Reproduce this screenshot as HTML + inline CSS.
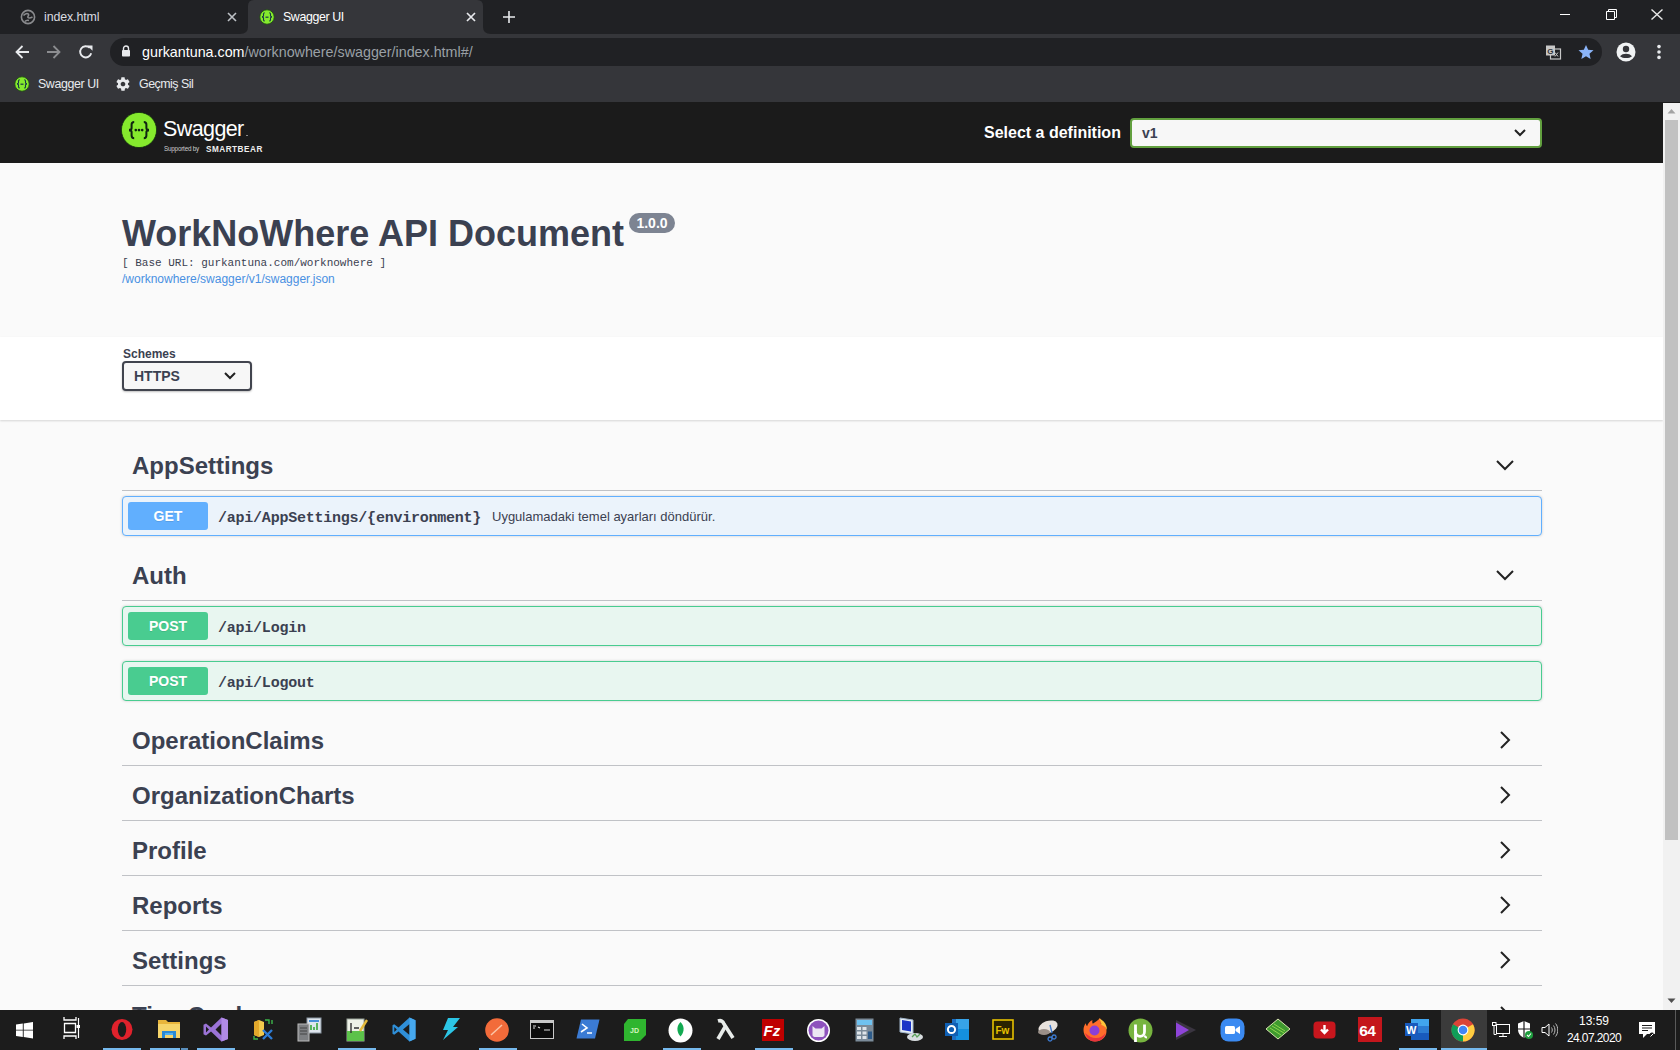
<!DOCTYPE html>
<html><head><meta charset="utf-8">
<style>
*{margin:0;padding:0;box-sizing:border-box}
html,body{width:1680px;height:1050px;overflow:hidden;background:#fafafa;font-family:"Liberation Sans",sans-serif}
.a{position:absolute}
svg{display:block}
/* chrome */
#tabs{left:0;top:0;width:1680px;height:34px;background:#202124}
#toolbar{left:0;top:34px;width:1680px;height:68px;background:#35363a}
#omni{left:110px;top:38px;width:1492px;height:28px;background:#202124;border-radius:14px}
.ct{color:#e8eaed;font-size:13px;white-space:nowrap}
/* swagger */
#topbar{left:0;top:102px;width:1663px;height:61px;background:#1b1b1b}
#info{left:0;top:163px;width:1663px;height:174px;background:#fafafa}
#schemes{left:0;top:337px;width:1663px;height:83px;background:#fff;box-shadow:0 1px 2px rgba(0,0,0,.15)}
.tag{left:122px;width:1420px;height:50px;border-bottom:1px solid rgba(59,65,81,.3)}
.tag span{position:absolute;left:10px;top:11px;font-size:24px;font-weight:bold;color:#3b4151;white-space:nowrap}
.tag svg{position:absolute;left:1373px;top:14px}
.op{left:122px;width:1420px;height:40px;border-radius:4px;box-shadow:0 0 3px rgba(0,0,0,.19)}
.op.get{background:#ebf3fb;border:1px solid #61affe}
.op.post{background:#e8f6f0;border:1px solid #49cc90}
.meth{position:absolute;left:5px;top:5px;width:80px;height:28px;border-radius:3px;color:#fff;font-weight:bold;font-size:14px;text-align:center;line-height:28px;text-shadow:0 1px 0 rgba(0,0,0,.1)}
.get .meth{background:#61affe}
.post .meth{background:#49cc90}
.path{position:absolute;left:95px;top:13px;font-family:"Liberation Mono",monospace;font-weight:bold;font-size:15px;letter-spacing:-0.23px;color:#3b4151;white-space:nowrap}
.desc{position:absolute;top:12px;font-size:13px;color:#3b4151;white-space:nowrap}
/* scrollbar */
#sb{left:1663px;top:103px;width:17px;height:907px;background:#f1f1f1}
#thumb{left:1665px;top:120px;width:13px;height:720px;background:#c1c1c1}
/* taskbar */
#task{left:0;top:1010px;width:1680px;height:40px;background:#1c1c1c}
.ul{position:absolute;top:1048px;height:2px;background:#76b9ed}
.ti{position:absolute;top:1018px;width:24px;height:24px}
</style></head><body>

<!-- ============ CHROME ============ -->
<div id="tabs" class="a"></div>
<div id="toolbar" class="a"></div>
<!-- active tab -->
<svg class="a" style="left:240px;top:0" width="251" height="35" viewBox="0 0 251 35"><path d="M0 35 L0 34 Q8 34 8 27 L8 6 Q8 0 14 0 L237 0 Q243 0 243 6 L243 27 Q243 34 251 34 L251 35 Z" fill="#35363a"/></svg>
<!-- inactive tab -->
<svg class="a" style="left:20px;top:9px" width="16" height="16" viewBox="0 0 16 16"><circle cx="8" cy="8" r="6.6" fill="none" stroke="#8a8b8e" stroke-width="1.6"/><path d="M3.5 6.5c1.5-2 4-2.5 5-1.2s-1.5 2.2-.5 3.2 3 .3 4.5-.5M5 12.5c1-1.2 2.5-1.5 4-1" fill="none" stroke="#8a8b8e" stroke-width="1.6"/></svg>
<div class="a ct" style="left:44px;top:10px;font-size:12.4px;letter-spacing:-0.1px;color:#dadce0">index.html</div>
<svg class="a" style="left:227px;top:12px" width="10" height="10" viewBox="0 0 10 10"><path d="M1 1l8 8M9 1l-8 8" stroke="#bdc1c6" stroke-width="1.6"/></svg>
<svg class="a" style="left:259px;top:9px" width="16" height="16" viewBox="0 0 16 16"><circle cx="8" cy="8" r="7.2" fill="#85ea2d" stroke="#1e4f10" stroke-width=".8"/><path d="M5.8 3.8c-1 0-1.3.5-1.3 1.3v1.6c0 .5-.3.9-.9.9v.6c.6 0 .9.4.9.9v1.6c0 .8.3 1.3 1.3 1.3M10.2 3.8c1 0 1.3.5 1.3 1.3v1.6c0 .5.3.9.9.9v.6c-.6 0-.9.4-.9.9v1.6c0 .8-.3 1.3-1.3 1.3" fill="none" stroke="#173647" stroke-width="1.1"/><path d="M6.5 8.2h3" stroke="#173647" stroke-width="1.2"/></svg>
<div class="a ct" style="left:283px;top:10px;font-size:12.4px;letter-spacing:-0.4px;color:#fff">Swagger UI</div>
<svg class="a" style="left:466px;top:12px" width="10" height="10" viewBox="0 0 10 10"><path d="M1 1l8 8M9 1l-8 8" stroke="#e8eaed" stroke-width="1.7"/></svg>
<svg class="a" style="left:502px;top:10px" width="14" height="14" viewBox="0 0 14 14"><path d="M7 1v12M1 7h12" stroke="#e8eaed" stroke-width="1.6"/></svg>
<!-- window controls -->
<div class="a" style="left:1560px;top:14px;width:10px;height:1px;background:#fff"></div>
<svg class="a" style="left:1605px;top:8px" width="13" height="13" viewBox="0 0 13 13"><path d="M1.5 3.5h8v8h-8z M3.5 3.5v-2h8v8h-2" fill="none" stroke="#fff" stroke-width="1"/></svg>
<svg class="a" style="left:1651px;top:9px" width="12" height="11" viewBox="0 0 12 11"><path d="M.5 .5l11 10M11.5 .5l-11 10" stroke="#e8e8e8" stroke-width="1.4"/></svg>
<!-- nav buttons -->
<svg class="a" style="left:14px;top:44px" width="16" height="16" viewBox="0 0 16 16"><path d="M15 8H2.5M8.5 2L2.5 8l6 6" fill="none" stroke="#e8eaed" stroke-width="1.8"/></svg>
<svg class="a" style="left:46px;top:44px" width="16" height="16" viewBox="0 0 16 16"><path d="M1 8h12.5M7.5 2l6 6-6 6" fill="none" stroke="#8c8d90" stroke-width="1.8"/></svg>
<svg class="a" style="left:78px;top:44px" width="16" height="16" viewBox="0 0 16 16"><path d="M13.2 9.2A5.6 5.6 0 1 1 11.8 3.9" fill="none" stroke="#e8eaed" stroke-width="1.9"/><path d="M9.2 1.5h5.3v5.3z" fill="#e8eaed"/></svg>
<div id="omni" class="a"></div>
<svg class="a" style="left:121px;top:45px" width="10" height="12" viewBox="0 0 10 12"><path d="M2.5 5V3.5a2.5 2.5 0 0 1 5 0V5" fill="none" stroke="#e8eaed" stroke-width="1.4"/><rect x="1" y="5" width="8" height="6.5" rx=".8" fill="#e8eaed"/></svg>
<div class="a ct" style="left:142px;top:44px;font-size:14.3px;color:#fff">gurkantuna.com<span style="color:#9aa0a6">/worknowhere/swagger/index.html#/</span></div>
<!-- translate icon -->
<svg class="a" style="left:1545px;top:44px" width="17" height="17" viewBox="0 0 17 17"><rect x="5.5" y="5" width="10" height="10" fill="none" stroke="#c7c7c7" stroke-width="1.2"/><rect x="1" y="1.5" width="9" height="10" fill="#c7c7c7"/><text x="2.2" y="9.8" font-family="Liberation Sans" font-weight="bold" font-size="8" fill="#35363a">G</text><path d="M10 8.5l3 4M13 8.5l-3 4" stroke="#c7c7c7" stroke-width="1"/></svg>
<!-- star -->
<svg class="a" style="left:1577px;top:43px" width="18" height="18" viewBox="0 0 24 24"><path d="M12 2.5l2.9 6.6 7.1.6-5.4 4.7 1.6 7-6.2-3.7-6.2 3.7 1.6-7L2 9.7l7.1-.6z" fill="#8ab4f8"/></svg>
<!-- profile -->
<svg class="a" style="left:1616px;top:42px" width="20" height="20" viewBox="0 0 20 20"><circle cx="10" cy="10" r="9.5" fill="#f1f3f4"/><circle cx="10" cy="7" r="3.2" fill="#35363a"/><path d="M4 14.3c1.4-1.9 3.6-2.6 6-2.6s4.6.7 6 2.6c-1.4 1.3-3.6 1.8-6 1.8s-4.6-.5-6-1.8z" fill="#35363a"/></svg>
<!-- menu -->
<svg class="a" style="left:1656px;top:44px" width="6" height="16" viewBox="0 0 6 16"><circle cx="3" cy="2.6" r="1.8" fill="#e8eaed"/><circle cx="3" cy="8" r="1.8" fill="#e8eaed"/><circle cx="3" cy="13.4" r="1.8" fill="#e8eaed"/></svg>
<!-- bookmarks -->
<svg class="a" style="left:14px;top:76px" width="16" height="16" viewBox="0 0 16 16"><circle cx="8" cy="8" r="7.2" fill="#85ea2d" stroke="#1e4f10" stroke-width=".8"/><path d="M5.8 3.8c-1 0-1.3.5-1.3 1.3v1.6c0 .5-.3.9-.9.9v.6c.6 0 .9.4.9.9v1.6c0 .8.3 1.3 1.3 1.3M10.2 3.8c1 0 1.3.5 1.3 1.3v1.6c0 .5.3.9.9.9v.6c-.6 0-.9.4-.9.9v1.6c0 .8-.3 1.3-1.3 1.3" fill="none" stroke="#173647" stroke-width="1.1"/><path d="M6.5 8.2h3" stroke="#173647" stroke-width="1.2"/></svg>
<div class="a ct" style="left:38px;top:77px;font-size:12.4px;letter-spacing:-0.4px;color:#e8eaed">Swagger UI</div>
<svg class="a" style="left:115px;top:76px" width="16" height="16" viewBox="0 0 24 24"><path fill="#e8eaed" d="M19.4 13c.04-.32.06-.66.06-1s-.02-.68-.06-1l2.1-1.65c.2-.15.24-.42.12-.64l-2-3.46c-.12-.22-.39-.3-.61-.22l-2.49 1c-.52-.4-1.08-.73-1.69-.98l-.38-2.65C14.46 2.18 14.25 2 14 2h-4c-.25 0-.46.18-.49.42l-.38 2.65c-.61.25-1.17.59-1.69.98l-2.49-1c-.23-.09-.49 0-.61.22l-2 3.46c-.13.22-.07.49.12.64L4.57 11c-.04.32-.07.65-.07 1s.03.68.07 1l-2.11 1.65c-.19.15-.24.42-.12.64l2 3.46c.12.22.39.3.61.22l2.49-1c.52.4 1.08.73 1.69.98l.38 2.65c.03.24.24.42.49.42h4c.25 0 .46-.18.49-.42l.38-2.65c.61-.25 1.17-.59 1.69-.98l2.49 1c.23.09.49 0 .61-.22l2-3.46c.12-.22.07-.49-.12-.64L19.4 13zM12 15.5c-1.93 0-3.5-1.57-3.5-3.5s1.57-3.5 3.5-3.5 3.5 1.57 3.5 3.5-1.57 3.5-3.5 3.5z"/></svg>
<div class="a ct" style="left:139px;top:77px;font-size:12.4px;letter-spacing:-0.5px;color:#e8eaed">Geçmiş Sil</div>
<div class="a" style="left:0;top:102px;width:1680px;height:1px;background:#1a1a1a"></div>

<!-- ============ SWAGGER ============ -->
<div id="topbar" class="a"></div>
<!-- logo -->
<svg class="a" style="left:121px;top:112px" width="36" height="36" viewBox="0 0 36 36">
<circle cx="18" cy="18" r="17.6" fill="#85ea2d" stroke="#0d2a0d" stroke-width=".8"/>
<path d="M13.2 10c-2.2 0-2.6 1-2.6 2.6v3.5c0 1-.6 1.7-1.6 1.7v.6c1 0 1.6.7 1.6 1.7v3.5c0 1.6.4 2.6 2.6 2.6" fill="none" stroke="#0f2412" stroke-width="2"/>
<path d="M22.8 10c2.2 0 2.6 1 2.6 2.6v3.5c0 1 .6 1.7 1.6 1.7v.6c-1 0-1.6.7-1.6 1.7v3.5c0 1.6-.4 2.6-2.6 2.6" fill="none" stroke="#0f2412" stroke-width="2"/>
<circle cx="14.8" cy="18.1" r="1.3" fill="#0f2412"/><circle cx="18" cy="18.1" r="1.3" fill="#0f2412"/><circle cx="21.2" cy="18.1" r="1.3" fill="#0f2412"/>
</svg>
<div class="a" style="left:163px;top:117px;font-size:21.5px;color:#fff;letter-spacing:-0.6px">Swagger</div>
<div class="a" style="left:246px;top:135px;width:2px;height:1px;background:#888"></div>
<div class="a" style="left:164px;top:145px;font-size:6.3px;color:#ccc;white-space:nowrap;letter-spacing:-0.2px">Supported by</div>
<div class="a" style="left:206px;top:145px;font-size:8.2px;font-weight:bold;color:#eee;white-space:nowrap;letter-spacing:0.5px">SMARTBEAR</div>
<div class="a" style="left:984px;top:124px;font-size:16px;font-weight:bold;color:#fff;white-space:nowrap">Select a definition</div>
<div class="a" style="left:1130px;top:118px;width:412px;height:30px;border:2px solid #62a03f;border-radius:4px;background:#f7f7f7"></div>
<div class="a" style="left:1142px;top:125px;font-size:14px;font-weight:bold;color:#3b4151">v1</div>
<svg class="a" style="left:1513px;top:127px" width="14" height="11" viewBox="0 0 14 11"><path d="M2 3l5 5 5-5" fill="none" stroke="#222" stroke-width="2"/></svg>

<div id="info" class="a"></div>
<div class="a" style="left:122px;top:213px;font-size:36px;font-weight:bold;color:#3b4151;white-space:nowrap">WorkNoWhere API Document</div>
<div class="a" style="left:629px;top:213px;width:46px;height:20px;text-align:center;border-radius:57px;background:#7d8492;color:#fff;font-size:14px;font-weight:bold;line-height:20px">1.0.0</div>
<div class="a" style="left:122px;top:257px;font-family:'Liberation Mono',monospace;font-size:11px;color:#3b4151;white-space:pre">[ Base URL: gurkantuna.com/worknowhere ]</div>
<div class="a" style="left:122px;top:272px;font-size:12px;color:#4990e2;white-space:nowrap">/worknowhere/swagger/v1/swagger.json</div>

<div id="schemes" class="a"></div>
<div class="a" style="left:123px;top:347px;font-size:12px;font-weight:bold;color:#3b4151">Schemes</div>
<div class="a" style="left:122px;top:361px;width:130px;height:30px;border:2px solid #41444e;border-radius:4px;background:#f7f7f7;box-shadow:0 1px 2px rgba(0,0,0,.25)"></div>
<div class="a" style="left:134px;top:368px;font-size:14px;font-weight:bold;color:#3b4151">HTTPS</div>
<svg class="a" style="left:223px;top:370px" width="14" height="11" viewBox="0 0 14 11"><path d="M2 3l5 5 5-5" fill="none" stroke="#222" stroke-width="2"/></svg>

<!-- tags -->
<div class="a tag" style="top:441px"><span>AppSettings</span><svg width="20" height="20" viewBox="0 0 20 20"><path d="M2 6l8 8 8-8" fill="none" stroke="#222" stroke-width="2"/></svg></div>
<div class="a op get" style="top:496px"><div class="meth">GET</div><div class="path">/api/AppSettings/{environment}</div><div class="desc" style="left:369px">Uygulamadaki temel ayarları döndürür.</div></div>

<div class="a tag" style="top:551px"><span>Auth</span><svg width="20" height="20" viewBox="0 0 20 20"><path d="M2 6l8 8 8-8" fill="none" stroke="#222" stroke-width="2"/></svg></div>
<div class="a op post" style="top:606px"><div class="meth">POST</div><div class="path">/api/Login</div></div>
<div class="a op post" style="top:661px"><div class="meth">POST</div><div class="path">/api/Logout</div></div>

<div class="a tag" style="top:716px"><span>OperationClaims</span><svg width="20" height="20" viewBox="0 0 20 20"><path d="M6 2l8 8-8 8" fill="none" stroke="#222" stroke-width="2"/></svg></div>
<div class="a tag" style="top:771px"><span>OrganizationCharts</span><svg width="20" height="20" viewBox="0 0 20 20"><path d="M6 2l8 8-8 8" fill="none" stroke="#222" stroke-width="2"/></svg></div>
<div class="a tag" style="top:826px"><span>Profile</span><svg width="20" height="20" viewBox="0 0 20 20"><path d="M6 2l8 8-8 8" fill="none" stroke="#222" stroke-width="2"/></svg></div>
<div class="a tag" style="top:881px"><span>Reports</span><svg width="20" height="20" viewBox="0 0 20 20"><path d="M6 2l8 8-8 8" fill="none" stroke="#222" stroke-width="2"/></svg></div>
<div class="a tag" style="top:936px"><span>Settings</span><svg width="20" height="20" viewBox="0 0 20 20"><path d="M6 2l8 8-8 8" fill="none" stroke="#222" stroke-width="2"/></svg></div>
<div class="a tag" style="top:991px"><span>TimeCards</span><svg width="20" height="20" viewBox="0 0 20 20"><path d="M6 2l8 8-8 8" fill="none" stroke="#222" stroke-width="2"/></svg></div>

<!-- ============ SCROLLBAR ============ -->
<div id="sb" class="a"></div>
<div id="thumb" class="a"></div>
<svg class="a" style="left:1667px;top:108px" width="9" height="6" viewBox="0 0 9 6"><path d="M0.5 5.5L4.5 1l4 4.5z" fill="#a3a3a3"/></svg>
<svg class="a" style="left:1667px;top:998px" width="9" height="6" viewBox="0 0 9 6"><path d="M0.5 .5h8L4.5 5z" fill="#505050"/></svg>

<!-- ============ TASKBAR ============ -->
<div id="task" class="a"></div>
<!-- start -->
<svg class="a" style="left:16px;top:1022px" width="17" height="17" viewBox="0 0 17 17"><path d="M0 2.4L6.8 1.5V7.7H0z M7.7 1.4L17 0V7.7H7.7z M0 8.6H6.8V14.9L0 14z M7.7 8.6H17V16.5L7.7 15.1z" fill="#fff"/></svg>
<!-- task view -->
<svg class="a" style="left:63px;top:1016px" width="17" height="24" viewBox="0 0 17 24"><path d="M1 1v3h12V1M1 23v-3h12v3M1.5 7.5h11v9h-11z" fill="none" stroke="#fff" stroke-width="1.3"/><path d="M15.5 2v20" stroke="#fff" stroke-width="1.2"/><rect x="13.5" y="9" width="4" height="3" fill="#fff"/></svg>
<!-- opera -->
<svg class="a" style="left:110px;top:1018px" width="24" height="23" viewBox="0 0 24 23"><ellipse cx="12" cy="11.5" rx="10.5" ry="10.5" fill="#e0222c"/><ellipse cx="12" cy="11.5" rx="4.2" ry="7.6" fill="#1c1c1c"/></svg>
<!-- explorer -->
<svg class="a" style="left:157px;top:1018px" width="24" height="22" viewBox="0 0 24 22"><path d="M1 2h8l2 2h12v16H1z" fill="#e8b53b"/><path d="M1 6h22v14H1z" fill="#f6d56a"/><path d="M5 13h14v7h-3v-4H8v4H5z" fill="#2a8ad4"/><rect x="8" y="15" width="8" height="2" fill="#4fb0f0"/></svg>
<!-- visual studio -->
<svg class="a" style="left:203px;top:1017px" width="26" height="25" viewBox="0 0 26 25"><path d="M18.5 0.5L25 3v19l-6.5 2.5L8 14.5l-5 4-2.5-1.3V7.8L3 6.5l5 4z M18.5 6.5L12.5 12.5l6 6z M3 9.5v6l3-3z" fill="#9b73d6"/><path d="M18.5 0.5L25 3v19l-6.5 2.5z" fill="#b18ae6"/></svg>
<!-- yellow doc tool -->
<svg class="a" style="left:251px;top:1018px" width="24" height="23" viewBox="0 0 24 23"><path d="M3 4l5-2 5 2v13l-5 2-5-2z" fill="#f2c94c"/><path d="M3 4l5-2v17l-5-2z" fill="#e3a92b"/><path d="M14 2h4v4M21 2v4" stroke="#3cb54a" stroke-width="1.4" fill="none"/><path d="M3 18v3h4" stroke="#3cb54a" stroke-width="1.4" fill="none"/><path d="M12 12l9 9M21 12l-9 9" stroke="#2e7cd6" stroke-width="2.4"/></svg>
<!-- server chart -->
<svg class="a" style="left:297px;top:1017px" width="26" height="25" viewBox="0 0 26 25"><rect x="10" y="1" width="14" height="15" fill="#dfe6ee" stroke="#8a96a2"/><rect x="12" y="3" width="10" height="2" fill="#4a90d9"/><path d="M14 13v-5M17 13v-3M20 13V6" stroke="#4caf50" stroke-width="1.8"/><rect x="1" y="7" width="11" height="17" fill="#7d7f82" stroke="#bbb"/><path d="M3 11h7M3 14h7M3 17h7" stroke="#444" stroke-width="1"/></svg>
<!-- green chart doc -->
<svg class="a" style="left:345px;top:1017px" width="24" height="25" viewBox="0 0 24 25"><rect x="2" y="2" width="17" height="22" fill="#eef2e8" stroke="#9aa39a"/><path d="M2 14h17v10H2z" fill="#5cc24a"/><path d="M6 6v10M9 11h5" stroke="#333" stroke-width="1.4"/><path d="M15 14l7-11" stroke="#e4b93b" stroke-width="2.4"/></svg>
<!-- vscode -->
<svg class="a" style="left:392px;top:1017px" width="24" height="25" viewBox="0 0 24 25"><path d="M17.5 0.5L23.5 3.3v18.4l-6 2.8L6.5 14.6 2.2 17.8 0.5 16.8V8.2l1.7-1 4.3 3.2z M17.5 7L11 12.5l6.5 5.5z M2.3 10v5l2.5-2.5z" fill="#2f8fd8"/><path d="M17.5 0.5L23.5 3.3v18.4l-6 2.8z" fill="#46a8ee"/></svg>
<!-- lightning -->
<svg class="a" style="left:440px;top:1017px" width="22" height="24" viewBox="0 0 22 24"><path d="M8 1h12L13 10h5L3 23l5-10H3z" fill="#2cc6e6"/></svg>
<!-- postman -->
<svg class="a" style="left:485px;top:1018px" width="24" height="24" viewBox="0 0 24 24"><circle cx="12" cy="12" r="11.8" fill="#f26b3a"/><path d="M6 17l11-10" stroke="#fbc6a8" stroke-width="1.5"/></svg>
<!-- terminal -->
<svg class="a" style="left:530px;top:1020px" width="24" height="19" viewBox="0 0 24 19"><rect x=".5" y=".5" width="23" height="18" fill="#0c0c0c" stroke="#c8c8c8"/><rect x="1" y="1" width="22" height="2" fill="#c8c8c8"/><path d="M3 6h3M3 8h2M8 7l2 1M14 10h6" stroke="#ddd" stroke-width="1.2"/></svg>
<!-- powershell -->
<svg class="a" style="left:576px;top:1019px" width="24" height="20" viewBox="0 0 24 20"><path d="M5 .5h18.5L19 19.5H.5z" fill="#3b7bd4"/><path d="M6 5l5 4-6 4M11 14h5" stroke="#fff" stroke-width="1.6" fill="none"/></svg>
<!-- JD -->
<svg class="a" style="left:623px;top:1018px" width="24" height="24" viewBox="0 0 24 24"><path d="M5 1h18v16l-6 6H1V6z" fill="#2fb52f"/><text x="7" y="15" font-family="Liberation Sans" font-size="7" font-weight="bold" fill="#d8f5c0">JD</text></svg>
<!-- mongo -->
<svg class="a" style="left:668px;top:1018px" width="25" height="25" viewBox="0 0 25 25"><circle cx="12.5" cy="12.5" r="12" fill="#fff"/><path d="M12.5 4c2.5 2.5 3.5 5.5 3 8.5-.4 2.5-1.7 4.5-3 6-1.3-1.5-2.6-3.5-3-6-.5-3 .5-6 3-8.5z" fill="#13aa52"/></svg>
<!-- lambda -->
<svg class="a" style="left:715px;top:1018px" width="22" height="23" viewBox="0 0 22 23"><path d="M3 3c3-1 5 0 6 3l9 14" stroke="#e8ecea" stroke-width="3.6" fill="none"/><path d="M10 9L3 21" stroke="#e8ecea" stroke-width="3.6"/></svg>
<!-- filezilla -->
<svg class="a" style="left:761px;top:1018px" width="24" height="24" viewBox="0 0 24 24"><rect x="1" y="1" width="22" height="22" fill="#bf0000"/><text x="2.5" y="18" font-family="Liberation Sans" font-style="italic" font-weight="bold" font-size="15" fill="#fff">Fz</text></svg>
<!-- purple cat -->
<svg class="a" style="left:806px;top:1018px" width="25" height="25" viewBox="0 0 25 25"><circle cx="12.5" cy="12.5" r="11.5" fill="#fff"/><circle cx="12.5" cy="12.5" r="10" fill="#8e52bd"/><path d="M6.5 17V8l3 2.5h6l3-2.5v9c0 1.5-1.5 2-3 2h-6c-1.5 0-3-.5-3-2z" fill="#ece6f3"/></svg>
<!-- calculator -->
<svg class="a" style="left:855px;top:1018px" width="19" height="24" viewBox="0 0 19 24"><rect x=".5" y=".5" width="18" height="23" fill="#7b8b99"/><rect x="2" y="2" width="15" height="5" fill="#6fc2f0"/><g fill="#dfe5ea"><rect x="2" y="9" width="4" height="3"/><rect x="7.5" y="9" width="4" height="3"/><rect x="2" y="13.5" width="4" height="3"/><rect x="7.5" y="13.5" width="4" height="3"/><rect x="2" y="18" width="4" height="3"/><rect x="7.5" y="18" width="4" height="3"/></g><rect x="13" y="13.5" width="4" height="7.5" fill="#2d5b8a"/></svg>
<!-- monitor -->
<svg class="a" style="left:899px;top:1016px" width="26" height="26" viewBox="0 0 26 26"><path d="M1 2l13 2v14L1 16z" fill="#e6eef6" stroke="#9fb3c8"/><path d="M3 4l9 1.5v10L3 14z" fill="#1b35c7"/><ellipse cx="16" cy="21" rx="8" ry="4" fill="#d8dde0"/><path d="M13 21l3-3 2 3 3-3" stroke="#5aa05a" stroke-width="1.3" fill="none"/></svg>
<!-- outlook -->
<svg class="a" style="left:944px;top:1017px" width="26" height="25" viewBox="0 0 26 25"><rect x="8" y="2" width="17" height="21" fill="#1c6fc4"/><rect x="12" y="2" width="13" height="10" fill="#37a3e8"/><rect x="12" y="12" width="13" height="11" fill="#1490df"/><rect x="1" y="6" width="13" height="13" fill="#0f5fb3"/><circle cx="7.5" cy="12.5" r="3.6" fill="none" stroke="#fff" stroke-width="2"/></svg>
<!-- Fw -->
<svg class="a" style="left:992px;top:1019px" width="22" height="21" viewBox="0 0 22 21"><rect x="1" y="1" width="20" height="19" fill="#2a2200" stroke="#e6c100" stroke-width="1.6"/><text x="3.5" y="14.5" font-family="Liberation Sans" font-weight="bold" font-size="10" fill="#e6c100">Fw</text></svg>
<!-- bird scissors -->
<svg class="a" style="left:1036px;top:1017px" width="26" height="25" viewBox="0 0 26 25"><ellipse cx="12" cy="10" rx="10" ry="6" transform="rotate(-20 12 10)" fill="#e7e1dc"/><ellipse cx="8" cy="15" rx="6" ry="3" fill="#9a8f88"/><path d="M14 8l2 8M18 18a2 2 0 1 0 .1 0M14 20a2 2 0 1 0 .1 0" stroke="#3c7ad0" stroke-width="1.4" fill="none"/></svg>
<!-- firefox -->
<svg class="a" style="left:1082px;top:1017px" width="26" height="25" viewBox="0 0 26 25"><path d="M13 24.5C6.6 24.5 1.5 19.4 1.5 13c0-2.5.8-4.8 2.2-6.7.2 1.2.7 2.2 1.4 3 .8-2.8 2.8-5 5.4-6.2-.4 1.3-.3 2.6.3 3.6C13 5 16 3.5 18 1c1 2 1.2 4 .8 5.5 2.2.5 4 2 5 4 .4 1 .7 2.2.7 3.5 0 5.9-5.1 10.5-11.5 10.5z" fill="#ff6d2b"/><path d="M17 1.5c3.5 1.2 6.5 4.2 7.5 8 .3 1 .5 2.3.5 3.5-1-2.5-3-4.4-5.5-5-.3-2.4-1.3-4.6-2.5-6.5z" fill="#ffc43a"/><circle cx="12.5" cy="13.5" r="5" fill="#8a3fd6"/><path d="M3 16c1.5 5 5.5 8.5 10 8.5 5 0 9.5-3.5 10.5-8.5-2 3-5.5 5-9.5 5-4 0-7.5-2-11-5z" fill="#e8323e"/></svg>
<!-- utorrent -->
<svg class="a" style="left:1128px;top:1018px" width="25" height="25" viewBox="0 0 25 25"><circle cx="12.5" cy="12.5" r="12" fill="#77b43f"/><path d="M7.5 6.5v7c0 2.8 2 4.8 4.6 4.8 2.4 0 4.4-1.8 4.4-4.6V6.5" stroke="#fff" stroke-width="2.8" fill="none"/><path d="M7.5 13v11" stroke="#fff" stroke-width="2.8"/><path d="M16.5 17.5c.5 1.5 1.5 2 2.5 2" stroke="#fff" stroke-width="2.2" fill="none"/></svg>
<!-- purple play -->
<svg class="a" style="left:1175px;top:1019px" width="22" height="22" viewBox="0 0 22 22"><path d="M1 1l20 10L1 21z" fill="#3a3540"/><path d="M1 3.5l13 7.5-13 7.5z" fill="#8e44d8"/></svg>
<!-- zoom -->
<svg class="a" style="left:1220px;top:1018px" width="25" height="24" viewBox="0 0 25 24"><rect x=".5" y=".5" width="24" height="23" rx="8" fill="#3b8af1"/><rect x="5" y="8" width="10" height="8" rx="1.5" fill="#fff"/><path d="M15.5 11l4.5-3v8l-4.5-3z" fill="#fff"/></svg>
<!-- green diamond -->
<svg class="a" style="left:1265px;top:1018px" width="26" height="22" viewBox="0 0 26 22"><path d="M13 1l12 10-12 10L1 11z" fill="#3f9a2f"/><path d="M13 1l12 10-12 10L1 11z" fill="none" stroke="#d9e6b0" stroke-width="1"/><path d="M7 8l12 7M9 6l11 7M5 10l11 7" stroke="#8fd64a" stroke-width="1"/></svg>
<!-- red download -->
<svg class="a" style="left:1313px;top:1021px" width="23" height="18" viewBox="0 0 23 18"><rect x=".5" y=".5" width="22" height="17" rx="4" fill="#c8161d"/><path d="M11.5 4v7M8 8.5l3.5 3.5 3.5-3.5" stroke="#fff" stroke-width="2.4" fill="none"/></svg>
<!-- 64 -->
<svg class="a" style="left:1358px;top:1017px" width="24" height="25" viewBox="0 0 24 25"><rect x="0" y="0" width="24" height="25" fill="#c4161c"/><text x="1.2" y="19" font-family="Liberation Sans" font-weight="bold" font-size="15.5" fill="#fff" letter-spacing="-0.5">64</text></svg>
<!-- word -->
<svg class="a" style="left:1404px;top:1018px" width="26" height="23" viewBox="0 0 26 23"><rect x="7" y="1" width="18" height="21" rx="1" fill="#2b7cd3"/><rect x="7" y="1" width="18" height="7" fill="#41a5ee"/><rect x="7" y="15" width="18" height="7" fill="#185abd"/><rect x="1" y="5" width="13" height="13" fill="#185abd"/><text x="2" y="16" font-family="Liberation Sans" font-weight="bold" font-size="11" fill="#fff">W</text></svg>
<!-- chrome highlight -->
<div class="a" style="left:1441px;top:1010px;width:46px;height:40px;background:#3b3b3b"></div>
<svg class="a" style="left:1451px;top:1018px" width="24" height="24" viewBox="0 0 24 24"><circle cx="12" cy="12" r="11.5" fill="#db4437"/><path d="M12 12L22 6.2A11.5 11.5 0 0 1 12 23.5z" fill="#ffcd40"/><path d="M12 12L12 23.5A11.5 11.5 0 0 1 2 6.2z" fill="#0f9d58"/><circle cx="12" cy="12" r="5.4" fill="#fff"/><circle cx="12" cy="12" r="4.3" fill="#4285f4"/></svg>
<!-- underlines -->
<div class="ul" style="left:103px;width:38px"></div>
<div class="ul" style="left:150px;width:30px"></div><div class="ul" style="left:181px;width:7px;background:#5a8fbd"></div>
<div class="ul" style="left:197px;width:38px"></div>
<div class="ul" style="left:338px;width:38px"></div>
<div class="ul" style="left:479px;width:38px"></div>
<div class="ul" style="left:663px;width:38px"></div>
<div class="ul" style="left:755px;width:38px"></div>
<div class="ul" style="left:1399px;width:38px"></div>
<div class="ul" style="left:1441px;width:46px"></div>
<!-- tray -->
<svg class="a" style="left:1492px;top:1022px" width="18" height="16" viewBox="0 0 18 16"><rect x="4.5" y="2.5" width="13" height="9" fill="none" stroke="#fff" stroke-width="1"/><path d="M11 11.5v2.5M7 14.5h8" stroke="#fff" stroke-width="1"/><rect x=".5" y=".5" width="3.5" height="3" fill="none" stroke="#fff" stroke-width="1"/><path d="M2 3.5v9h2.5" stroke="#fff" stroke-width="1" fill="none"/></svg>
<svg class="a" style="left:1517px;top:1020px" width="17" height="20" viewBox="0 0 17 20"><path d="M7 1l6 2.5v6c0 4-2.8 7-6 8.5C3.8 16.5 1 13.5 1 9.5v-6z" fill="#fff"/><path d="M7 1v17M1 9h12" stroke="#1c1c1c" stroke-width="1.2"/><circle cx="12" cy="15" r="4" fill="#1e9e3e"/><path d="M10 15l1.5 1.5 2.5-3" stroke="#fff" stroke-width="1.1" fill="none"/></svg>
<svg class="a" style="left:1541px;top:1022px" width="17" height="16" viewBox="0 0 17 16"><path d="M1 5.5h3l4-3.5v12l-4-3.5H1z" fill="none" stroke="#fff" stroke-width="1"/><path d="M10.5 5.5c1 1.5 1 3.5 0 5M12.5 3.5c2 2.5 2 6.5 0 9M14.5 1.5c3 3.5 3 9.5 0 13" fill="none" stroke="#bbb" stroke-width="1"/></svg>
<div class="a" style="left:1566px;top:1014px;width:56px;text-align:center;font-size:12px;color:#fff">13:59</div>
<div class="a" style="left:1558px;top:1031px;width:72px;text-align:center;font-size:12px;letter-spacing:-0.6px;color:#fff">24.07.2020</div>
<svg class="a" style="left:1638px;top:1021px" width="18" height="18" viewBox="0 0 18 18"><path d="M1 1h16v12H9l-4 4v-4H1z" fill="#fff"/><path d="M4 4.5h10M4 7h10M4 9.5h6" stroke="#1c1c1c" stroke-width="1.2"/><circle cx="14" cy="14" r="2.5" fill="#1c1c1c"/><path d="M12.5 15.5l3-3" stroke="#fff" stroke-width="1"/></svg>
<div class="a" style="left:1675px;top:1010px;width:1px;height:40px;background:#5a5a5a"></div>

</body></html>
